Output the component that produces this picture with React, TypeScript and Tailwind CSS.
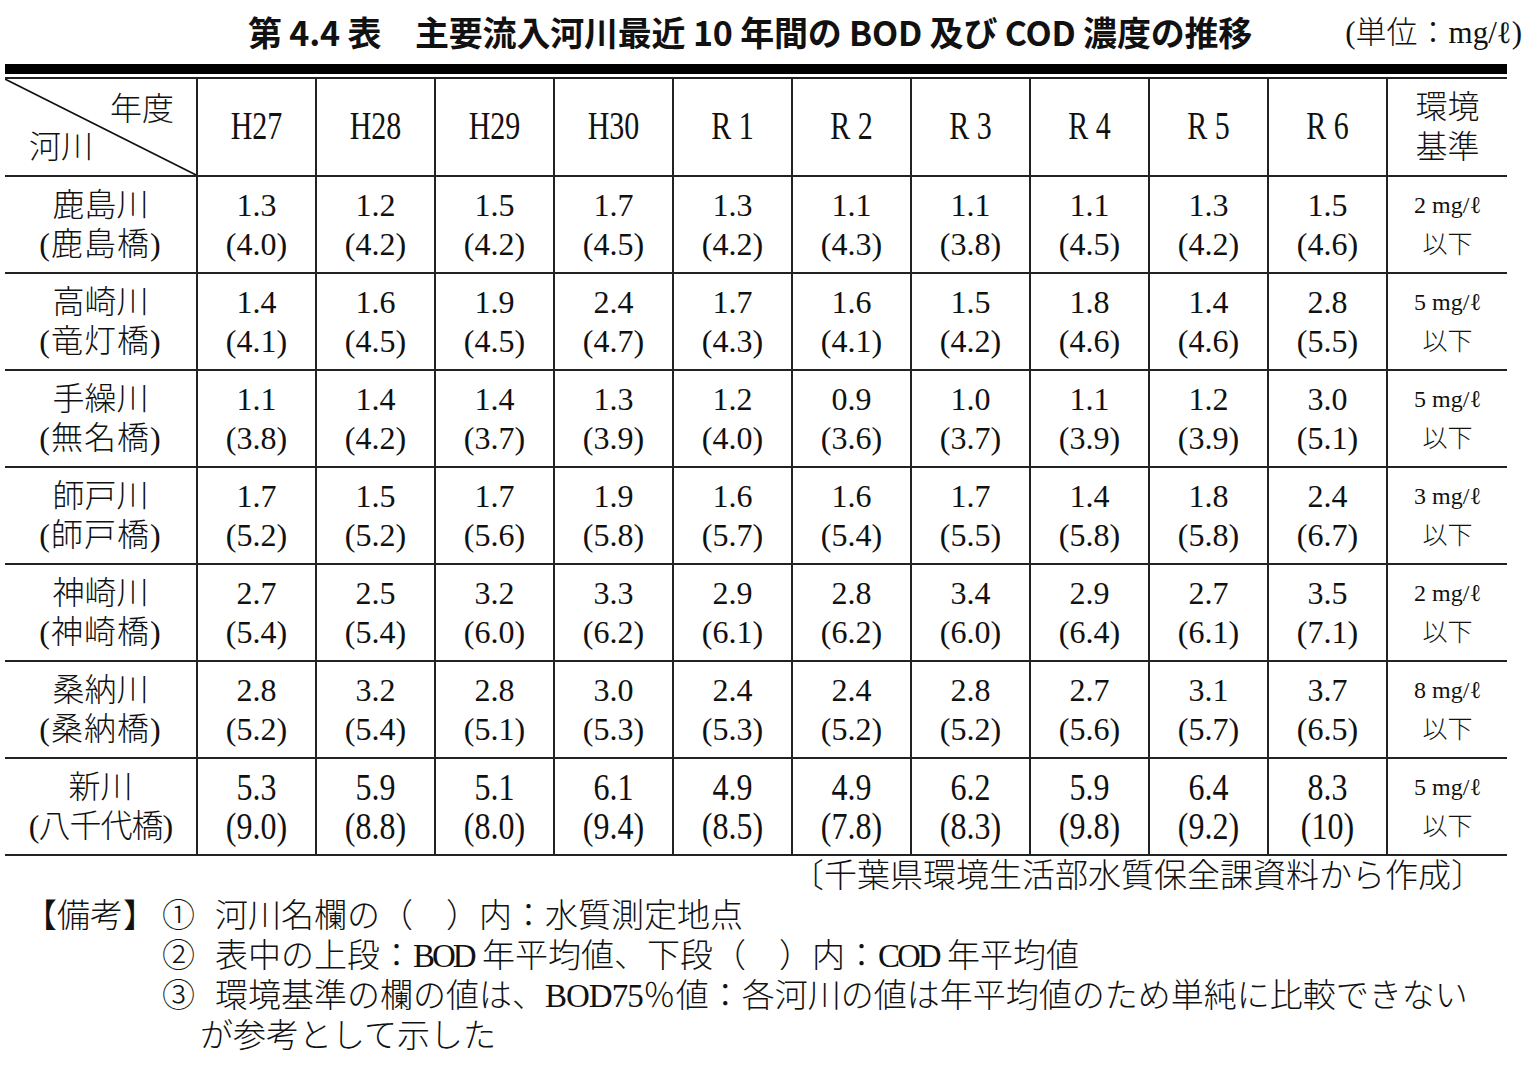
import React from "react";

const SERIF = { fontFamily: '"Liberation Serif", "Noto Sans CJK JP", serif' } as const;

type Row = { name: string; sub: string; vals: [string, string][]; std: string };

const rows: Row[] = [
  { name: "鹿島川", sub: "(鹿島橋)", vals: [["1.3","4.0"],["1.2","4.2"],["1.5","4.2"],["1.7","4.5"],["1.3","4.2"],["1.1","4.3"],["1.1","3.8"],["1.1","4.5"],["1.3","4.2"],["1.5","4.6"]], std: "2" },
  { name: "高崎川", sub: "(竜灯橋)", vals: [["1.4","4.1"],["1.6","4.5"],["1.9","4.5"],["2.4","4.7"],["1.7","4.3"],["1.6","4.1"],["1.5","4.2"],["1.8","4.6"],["1.4","4.6"],["2.8","5.5"]], std: "5" },
  { name: "手繰川", sub: "(無名橋)", vals: [["1.1","3.8"],["1.4","4.2"],["1.4","3.7"],["1.3","3.9"],["1.2","4.0"],["0.9","3.6"],["1.0","3.7"],["1.1","3.9"],["1.2","3.9"],["3.0","5.1"]], std: "5" },
  { name: "師戸川", sub: "(師戸橋)", vals: [["1.7","5.2"],["1.5","5.2"],["1.7","5.6"],["1.9","5.8"],["1.6","5.7"],["1.6","5.4"],["1.7","5.5"],["1.4","5.8"],["1.8","5.8"],["2.4","6.7"]], std: "3" },
  { name: "神崎川", sub: "(神崎橋)", vals: [["2.7","5.4"],["2.5","5.4"],["3.2","6.0"],["3.3","6.2"],["2.9","6.1"],["2.8","6.2"],["3.4","6.0"],["2.9","6.4"],["2.7","6.1"],["3.5","7.1"]], std: "2" },
  { name: "桑納川", sub: "(桑納橋)", vals: [["2.8","5.2"],["3.2","5.4"],["2.8","5.1"],["3.0","5.3"],["2.4","5.3"],["2.4","5.2"],["2.8","5.2"],["2.7","5.6"],["3.1","5.7"],["3.7","6.5"]], std: "8" },
  { name: "新川", sub: "(八千代橋)", vals: [["5.3","9.0"],["5.9","8.8"],["5.1","8.0"],["6.1","9.4"],["4.9","8.5"],["4.9","7.8"],["6.2","8.3"],["5.9","9.8"],["6.4","9.2"],["8.3","10"]], std: "5" },
];

const years = ["H27", "H28", "H29", "H30", "R 1", "R 2", "R 3", "R 4", "R 5", "R 6"];

export default function App() {
  return (
    <div className="w-[1530px] h-[1081px] bg-white text-[#111] overflow-hidden font-light" style={SERIF}>
      {/* title row */}
      <div className="flex items-center h-[64px]">
        <div
          className="ml-[248px] text-[34px] font-bold leading-none tracking-[-0.2px] whitespace-pre"
          style={{ fontFamily: '"Noto Sans CJK JP", sans-serif' }}
        >
          第 4.4 表　主要流入河川最近 10 年間の BOD 及び COD 濃度の推移
        </div>
        <div className="ml-auto mr-[8px] text-[31px] leading-none whitespace-pre">
          (単位：mg/ℓ)
        </div>
      </div>
      {/* thick rule */}
      <div className="ml-[5px] w-[1502px] h-[10px] bg-black" />
      <div className="h-[3px]" />
      <table className="ml-[5px] w-[1502px] table-fixed border-collapse">
        <colgroup>
          <col className="w-[192px]" />
          {years.map((y) => (
            <col key={y} className="w-[119px]" />
          ))}
          <col className="w-[120px]" />
        </colgroup>
        <thead>
          <tr className="h-[98px] border-t-2 border-b-2 border-[#222]">
            <td className="p-0">
              <div className="relative h-[96px] flex flex-col justify-between pt-[12px] pb-[10px]">
                <svg className="absolute inset-0 w-full h-full" viewBox="0 0 192 96" preserveAspectRatio="none">
                  <line x1="0" y1="0" x2="192" y2="96" stroke="#111" strokeWidth="1.6" />
                </svg>
                <div className="text-[32px] leading-[36px] text-right pr-[22px]">年度</div>
                <div className="text-[32px] leading-[36px] pl-[24px]">河川</div>
              </div>
            </td>
            {years.map((y) => (
              <td key={y} className="p-0 border-l-2 border-[#222] text-center align-middle">
                <span className="inline-block text-[30px] leading-none scale-y-[1.3] whitespace-pre">{y}</span>
              </td>
            ))}
            <td className="p-0 border-l-2 border-[#222] text-center align-middle text-[32px] leading-[40px]">
              <div>環境</div>
              <div>基準</div>
            </td>
          </tr>
        </thead>
        <tbody>
          {rows.map((r, i) => {
            const last = i === rows.length - 1;
            return (
              <tr key={r.name} className="h-[97px] border-b-2 border-[#222]">
                <td className="p-0 text-center align-middle text-[32px] leading-[39px]">
                  <div>{r.name}</div>
                  <div className={last ? "tracking-[-1px]" : "tracking-[1px]"}>{r.sub}</div>
                </td>
                {r.vals.map(([a, b], j) => (
                  <td key={j} className="p-0 border-l-2 border-[#222] text-center align-middle text-[32px] leading-[39px]">
                    <div>
                      <span className={last ? "inline-block scale-y-[1.2]" : "inline-block"}>{a}</span>
                    </div>
                    <div>
                      <span className={last ? "inline-block scale-y-[1.2]" : "inline-block"}>({b})</span>
                    </div>
                  </td>
                ))}
                <td className="p-0 border-l-2 border-[#222] text-center align-middle leading-[39px]">
                  <div className="text-[24px] whitespace-pre">{r.std} mg/ℓ</div>
                  <div className="text-[25px]">以下</div>
                </td>
              </tr>
            );
          })}
        </tbody>
      </table>
      {/* source */}
      <div className="w-[1530px] flex justify-end pr-[46px] text-[33px] leading-[40px]">
        〔千葉県環境生活部水質保全課資料から作成〕
      </div>
      {/* notes */}
      <div className="flex pl-[24px] text-[33px] leading-[40px]">
        <div className="w-[138px] shrink-0 whitespace-pre">【備考】</div>
        <div className="flex flex-col">
          <div className="flex">
            <span className="w-[53px] shrink-0">①</span>
            <span className="whitespace-pre">河川名欄の（　）内：水質測定地点</span>
          </div>
          <div className="flex">
            <span className="w-[53px] shrink-0">②</span>
            <span className="whitespace-pre">
              表中の上段：<span className="tracking-[-3px]">BOD</span> 年平均値、下段（　）内：<span className="tracking-[-3px]">COD</span> 年平均値
            </span>
          </div>
          <div className="flex">
            <span className="w-[53px] shrink-0">③</span>
            <span className="whitespace-pre">
              環境基準の欄の値は、<span className="tracking-[-1px]">BOD75</span>％値：各河川の値は年平均値のため単純に比較できない
            </span>
          </div>
          <div className="pl-[38px] whitespace-pre">が参考として示した</div>
        </div>
      </div>
    </div>
  );
}
